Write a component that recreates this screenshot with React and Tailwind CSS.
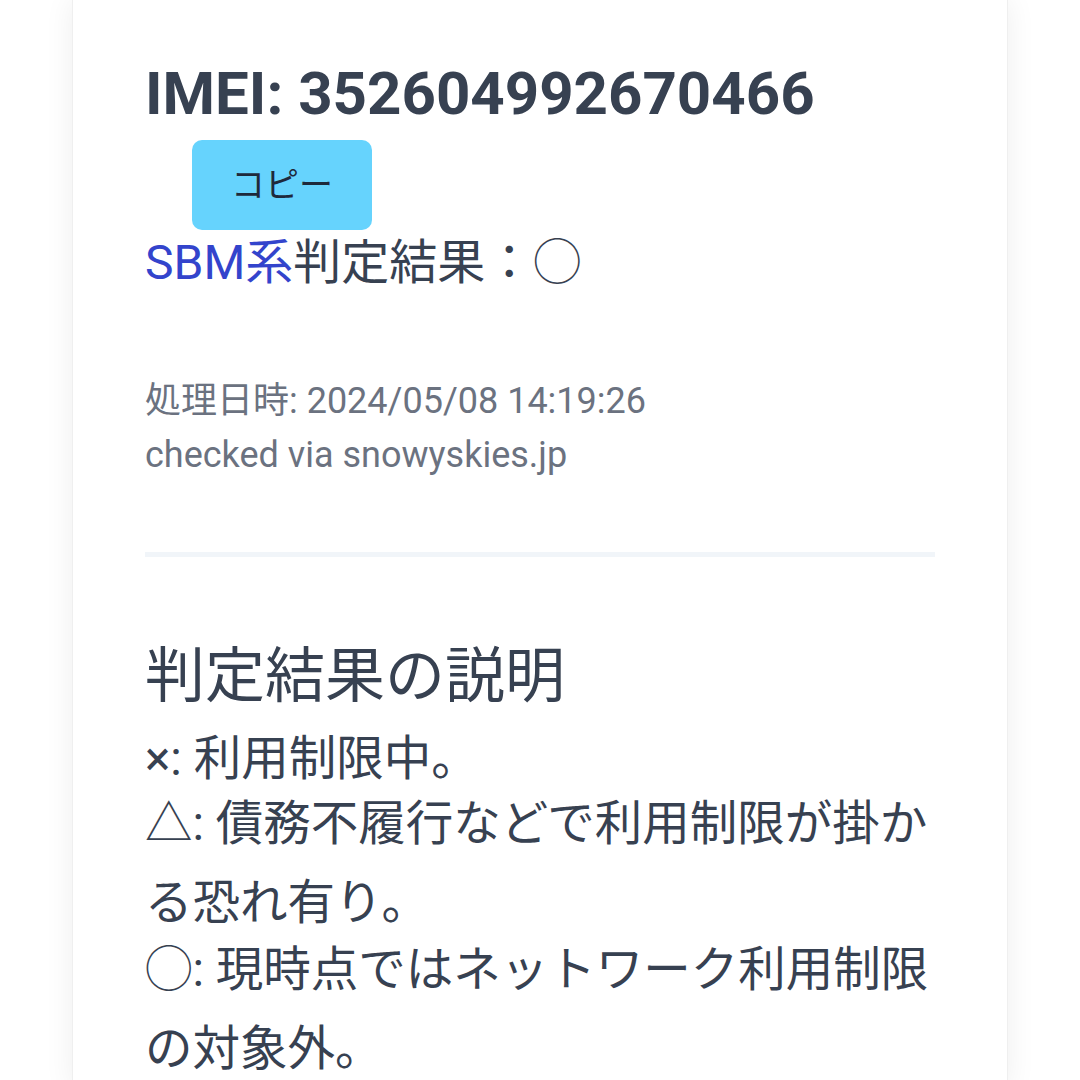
import React from "react";

const jp = { fontFamily: 'Roboto, "Noto Sans CJK JP", sans-serif' };

export default function App() {
  return (
    <div className="min-h-screen bg-white flex justify-center overflow-hidden" style={jp}>
      <div className="w-[936px] min-h-[1080px] bg-white shadow-[0_0_28px_rgba(0,0,0,0.07)] border-x border-[#efefef] pl-[72px] pr-[72px] pt-[58px]">
        <h1 className="text-[60px] leading-[72px] font-bold text-[#374151]">
          IMEI: 352604992670466
        </h1>
        <button className="mt-[10px] ml-[47px] w-[180px] h-[90px] rounded-[10px] bg-[#66d3fd] text-[34px] text-[#1e293b] flex items-center justify-center">
          コピー
        </button>
        <p className="text-[48px] leading-[60px] text-[#374151] mt-[3px]">
          <span className="text-[#3344cc]">SBM系</span>判定結果：◯
        </p>
        <div className="mt-[81px] text-[36px] leading-[54px] text-[#6b7280]">
          <p>処理日時: 2024/05/08 14:19:26</p>
          <p>checked via snowyskies.jp</p>
        </div>
        <div className="mt-[70px] h-[5px] bg-[#f1f5f9]" />
        <h2 className="mt-[77px] text-[60px] leading-[86px] text-[#374151]">判定結果の説明</h2>
        <div className="text-[47.5px] leading-[79px] text-[#374151]">
          <p>×: 利用制限中。</p>
          <p className="-mt-[14px]">△: 債務不履行などで利用制限が掛かる恐れ有り。</p>
          <p className="-mt-[12px]">◯: 現時点ではネットワーク利用制限の対象外。</p>
        </div>
      </div>
    </div>
  );
}
